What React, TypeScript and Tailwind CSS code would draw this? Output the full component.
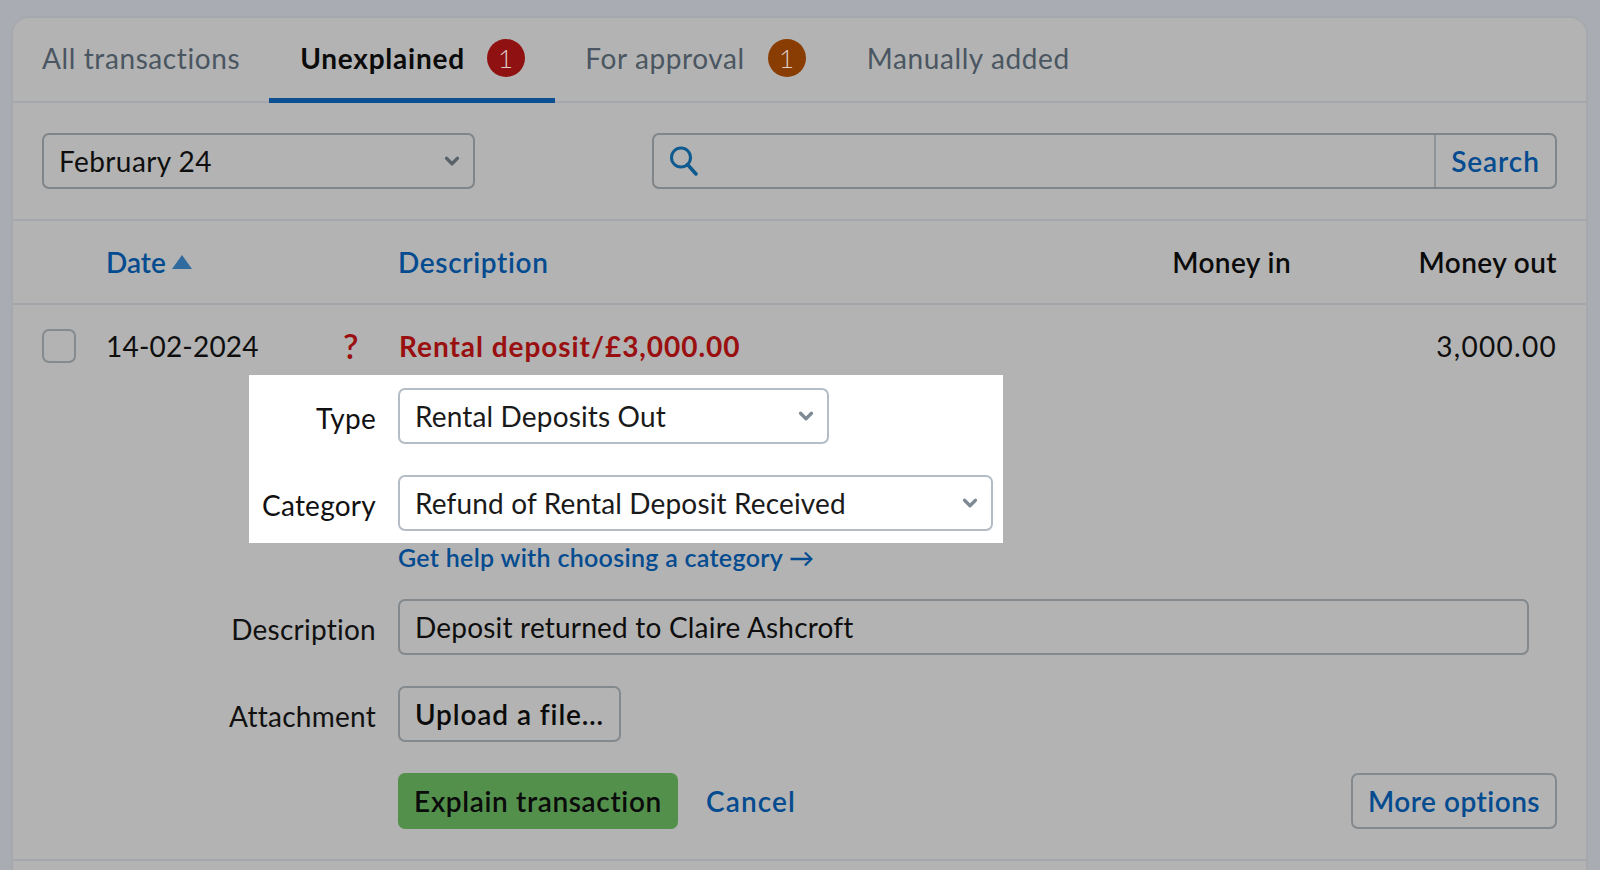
import React from 'react';
import { ChevronDown } from 'lucide-react';

const Badge = ({ color }: { color: string }) => (
    <span className={`flex h-[38px] w-[38px] items-center justify-center rounded-full text-[26px] font-light leading-none text-[#dccfca] ${color}`}>1</span>
);

const FieldLabel = ({ children, width = 'w-[127px]' }: { children: React.ReactNode; width?: string }) => (
    <label className={`${width} shrink-0 pt-[4px] text-right text-[28px] leading-[32px] tracking-[0.25px] text-[#111]`}>{children}</label>
);

const SelectBox = ({ value, width }: { value: string; width: string }) => (
    <div className={`flex h-[56px] items-center justify-between rounded-[7px] border-2 border-[#b4bdc6] bg-white pl-[15px] pr-[10px] text-[28px] tracking-[0.15px] text-[#1a1a1a] ${width}`}>
        <span>{value}</span>
        <ChevronDown size={22} strokeWidth={3.5} className="text-[#7d8a96]" />
    </div>
);

export default function App() {
    return (
        <div className="h-[870px] w-[1600px] overflow-hidden bg-[#a9adb3] pl-[11px] pr-[12px] pt-[16px] font-['Lato',sans-serif]">
            <div className="rounded-t-[18px] border-2 border-b-0 border-[#a5a8ad] bg-[#b3b3b3]">
                {/* tabs */}
                <div className="flex h-[85px] items-stretch border-b-2 border-[#a3a6aa] pl-[29px] text-[28px] tracking-[0.6px]">
                    <div className="flex items-center pb-[4px] text-[#4a5661]">All transactions</div>
                    <div className="relative ml-[29px] flex w-[286px] items-center pb-[4px] pl-[31px]">
                        <span className="font-bold tracking-[0.75px] text-[#0b0b0b]">Unexplained</span>
                        <span className="ml-[22px]"><Badge color="bg-[#8f1111]" /></span>
                        <span className="absolute bottom-[-2px] left-0 right-0 h-[5px] bg-[#0c4e92]" />
                    </div>
                    <div className="ml-[30px] flex items-center pb-[4px] text-[#4a5661]">
                        <span>For approval</span>
                        <span className="ml-[23px]"><Badge color="bg-[#8a3d02]" /></span>
                    </div>
                    <div className="ml-[61px] flex items-center pb-[4px] text-[#4a5661]">Manually added</div>
                </div>

                {/* filters */}
                <div className="flex h-[118px] items-start justify-between border-b-2 border-[#a3a6aa] pl-[29px] pr-[29px] pt-[30px]">
                    <div className="flex h-[56px] w-[433px] items-center justify-between rounded-[7px] border-2 border-[#7f8589] pl-[15px] pr-[10px] text-[28px] tracking-[0.4px] text-[#0e0e0e]">
                        <span>February 24</span>
                        <ChevronDown size={22} strokeWidth={3.5} className="text-[#5a6269]" />
                    </div>
                    <div className="flex h-[56px] w-[905px] items-stretch rounded-[7px] border-2 border-[#7f8589]">
                        <div className="flex flex-1 items-center pl-[15px]">
                            <svg width="30" height="30" viewBox="0 0 30 30" fill="none" stroke="#0f5a8e">
                                <circle cx="12" cy="11.5" r="9.5" strokeWidth="3" />
                                <line x1="18.5" y1="18.5" x2="27" y2="28" strokeWidth="3.5" strokeLinecap="round" />
                            </svg>
                        </div>
                        <div className="flex w-[121px] items-center justify-center border-l-2 border-[#8f9498] text-[28px] font-semibold tracking-[0.9px] text-[#044b90]">Search</div>
                    </div>
                </div>

                {/* table header */}
                <div className="flex h-[84px] items-center border-b-2 border-[#a3a6aa] pl-[93px] pr-[29px] text-[28px] font-semibold">
                    <div className="flex w-[292px] items-center text-[#044b90]">
                        <span>Date</span>
                        <svg width="20" height="14" viewBox="0 0 20 14" className="ml-[6px]"><polygon points="10,0 20,14 0,14" fill="#2f6b9e" /></svg>
                    </div>
                    <div className="flex-1 tracking-[0.65px] text-[#044b90]">Description</div>
                    <div className="text-[#0b0b0b] tracking-[0.4px]">Money in</div>
                    <div className="w-[266px] text-right tracking-[0.4px] text-[#0b0b0b]">Money out</div>
                </div>

                {/* row */}
                <div className="border-b-2 border-[#a3a6aa] pb-[30px]">
                    <div className="flex h-[70px] items-center pl-[29px] pr-[29px] pt-[11px] text-[28px] tracking-[0.2px]">
                        <span className="h-[34px] w-[34px] rounded-[7px] border-2 border-[#848a8e]" />
                        <span className="ml-[30px] w-[237px] text-[#0e0e0e]">14-02-2024</span>
                        <span className="w-[56px] text-[34px] font-semibold leading-none text-[#9a0f0f]">?</span>
                        <span className="flex-1 font-bold tracking-[0.95px] text-[#9a0f0f]">Rental deposit/£3,000.00</span>
                        <span className="tracking-[1.3px] text-[#0e0e0e]">3,000.00</span>
                    </div>

                    {/* highlighted fields */}
                    <div className="ml-[236px] flex w-[754px] flex-col gap-[31px] bg-white pb-[12px] pr-[10px] pt-[13px]">
                        <div className="flex items-center gap-[22px]">
                            <FieldLabel>Type</FieldLabel>
                            <SelectBox value="Rental Deposits Out" width="w-[431px]" />
                        </div>
                        <div className="flex items-center gap-[22px]">
                            <FieldLabel>Category</FieldLabel>
                            <SelectBox value="Refund of Rental Deposit Received" width="w-[596px]" />
                        </div>
                    </div>

                    <div className="ml-[385px] flex h-[30px] items-center text-[25px] font-semibold tracking-[0.3px] text-[#044b90]">Get help with choosing a category →</div>

                    <div className="mt-[26px] flex flex-col gap-[31px]">
                        <div className="flex items-center pl-[186px]">
                            <FieldLabel width="w-[177px]">Description</FieldLabel>
                            <div className="ml-[22px] flex h-[56px] w-[1131px] items-center rounded-[7px] border-2 border-[#84898d] pl-[15px] text-[28px] tracking-[0.2px] text-[#0e0e0e]">Deposit returned to Claire Ashcroft</div>
                        </div>
                        <div className="flex items-center pl-[186px]">
                            <FieldLabel width="w-[177px]">Attachment</FieldLabel>
                            <button className="ml-[22px] flex h-[56px] w-[223px] items-center justify-center rounded-[7px] border-2 border-[#84898d] text-[28px] font-semibold tracking-[0.9px] text-[#0b0b0b]">Upload a file…</button>
                        </div>
                        <div className="flex items-center pl-[385px] pr-[29px]">
                            <button className="flex h-[56px] w-[280px] items-center justify-center rounded-[7px] bg-[#53904c] text-[28px] font-semibold tracking-[0.65px] text-[#0b0b0b]">Explain transaction</button>
                            <a className="ml-[28px] text-[28px] font-semibold tracking-[1.1px] text-[#044b90]">Cancel</a>
                            <button className="ml-auto flex h-[56px] w-[206px] items-center justify-center rounded-[7px] border-2 border-[#84898d] text-[28px] font-semibold tracking-[0.5px] text-[#044b90]">More options</button>
                        </div>
                    </div>
                </div>
                <div className="h-[20px]" />
            </div>
        </div>
    );
}
